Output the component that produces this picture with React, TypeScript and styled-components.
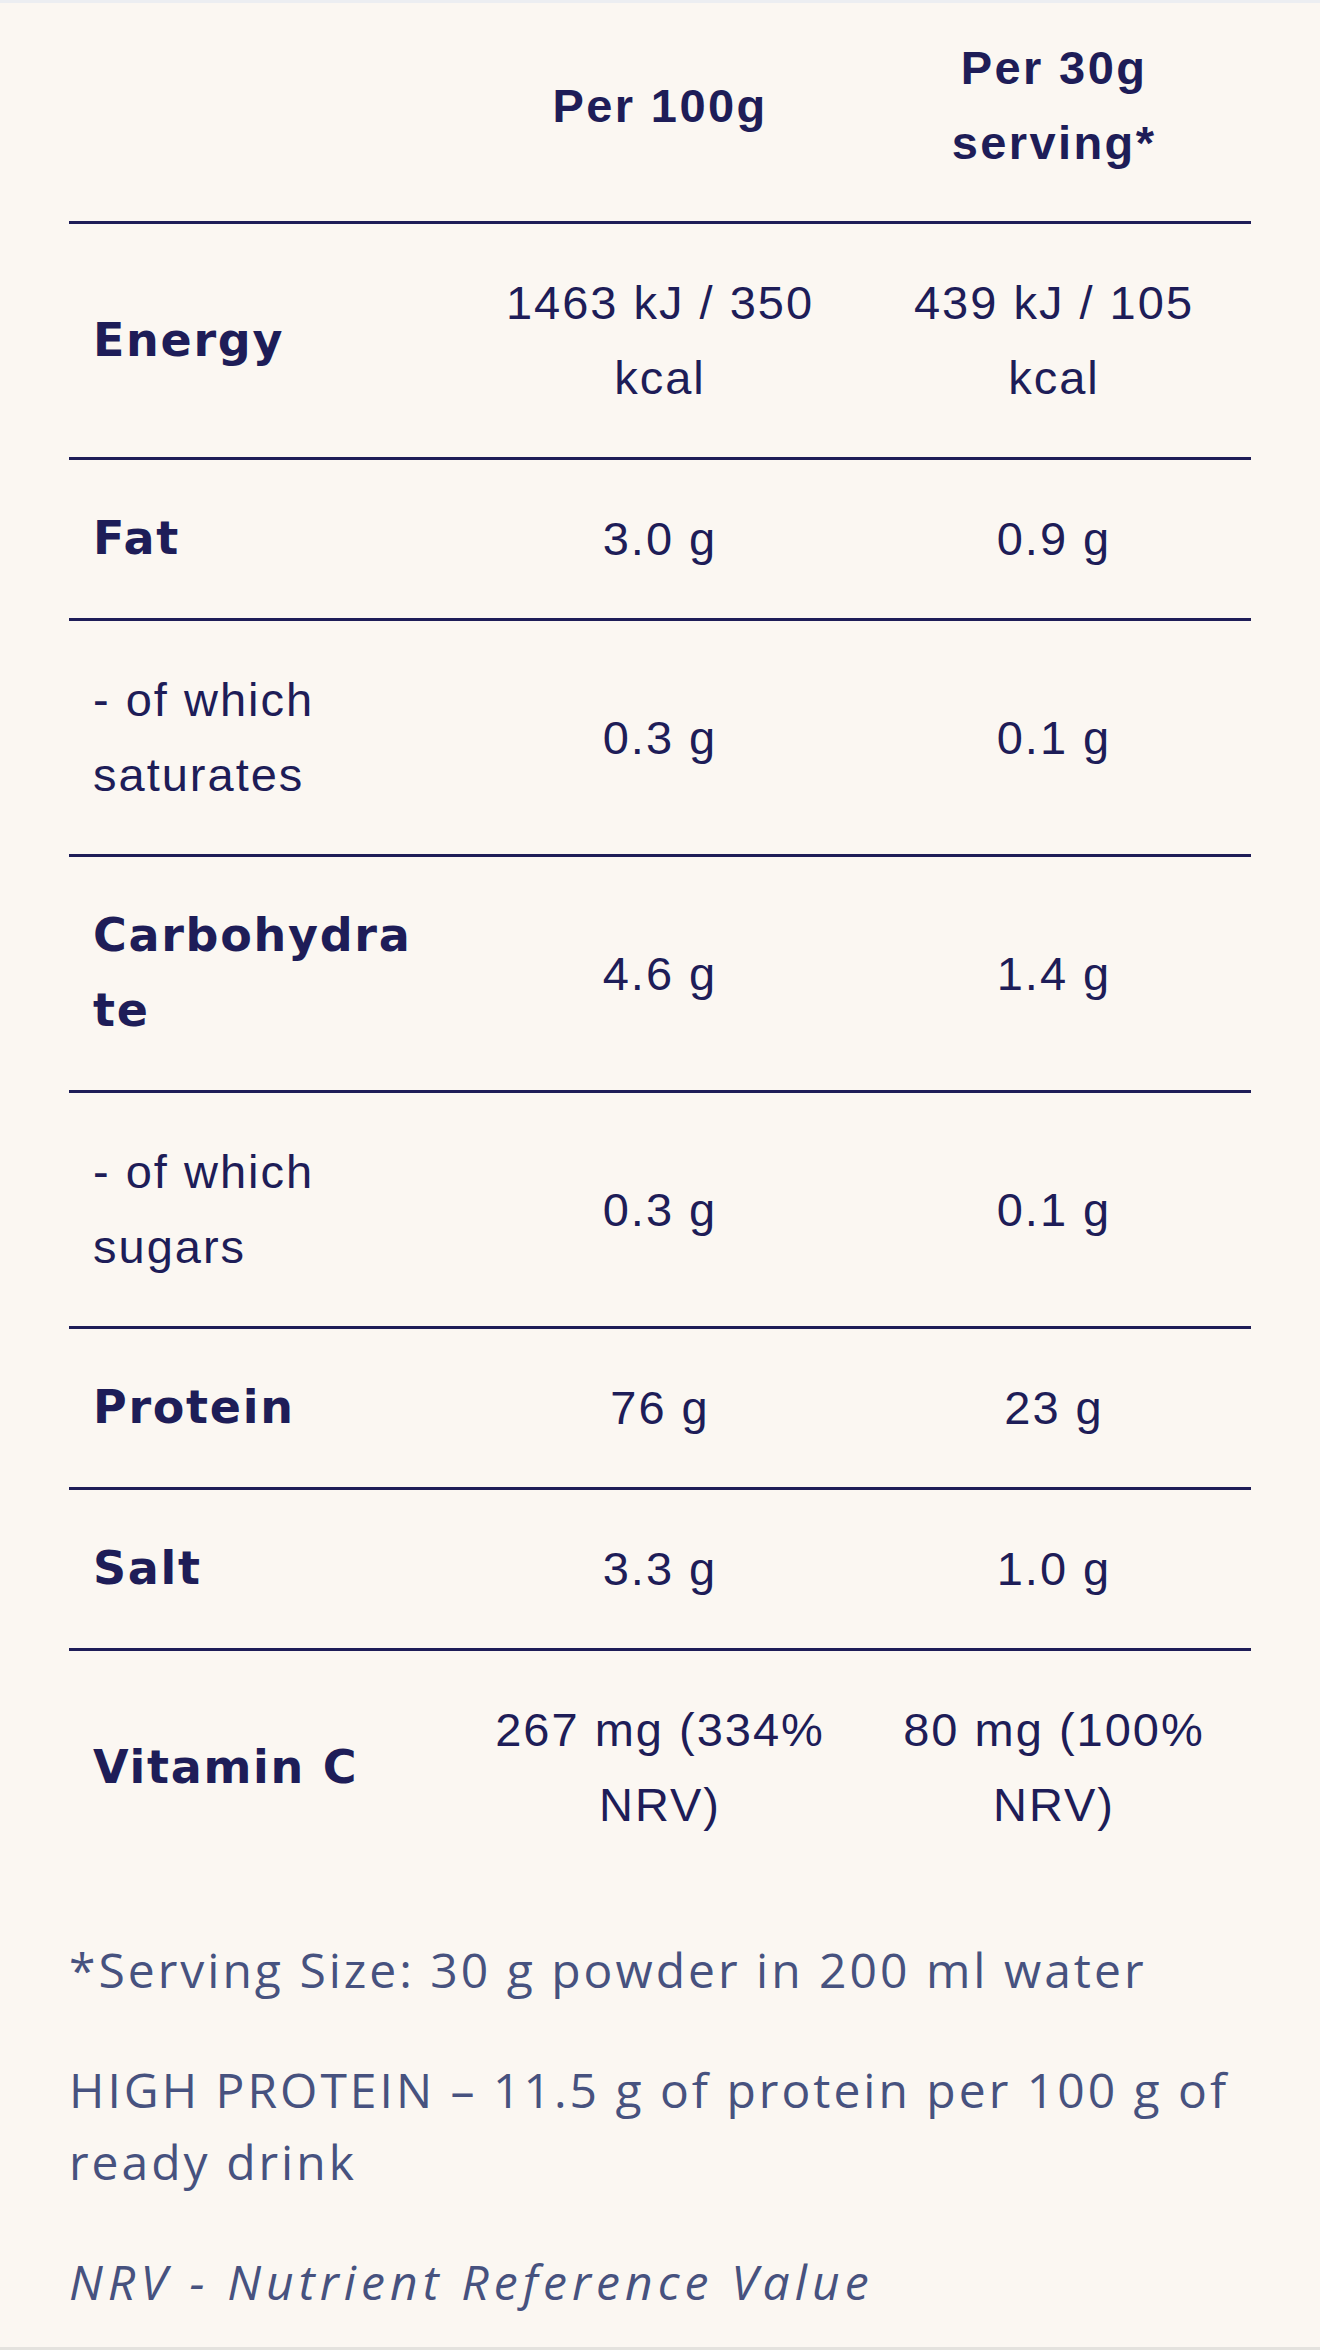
import React from "react";
import styled, { createGlobalStyle } from "styled-components";

const GlobalStyle = createGlobalStyle`
  html, body {
    margin: 0;
    padding: 0;
    background: #fbf7f2;
  }
  * { box-sizing: border-box; }
`;

const NAVY = "#1e1d58";
const SLATE = "#47527f";

const Page = styled.div`
  width: 1320px;
  min-height: 2350px;
  background: #fbf7f2;
  border-top: 3px solid #eceef2;
  border-bottom: 3px solid #e4e2de;
  padding: 0 69px;
  display: flex;
  flex-direction: column;
`;

const Table = styled.div`
  display: flex;
  flex-direction: column;
`;

const Row = styled.div<{ $header?: boolean; $last?: boolean }>`
  display: grid;
  grid-template-columns: repeat(3, 1fr);
  align-items: center;
  padding: ${(p) => (p.$header ? "27px 0 41px" : "41px 0 42px")};
  border-bottom: ${(p) => (p.$last ? "none" : `3px solid ${NAVY}`)};
`;

const Label = styled.div<{ $bold?: boolean }>`
  padding: 0 20px 0 24px;
  color: ${NAVY};
  font-family: ${(p) => (p.$bold ? `"DejaVu Sans", "Lato", sans-serif` : `"Liberation Sans", Arial, sans-serif`)};
  font-weight: ${(p) => (p.$bold ? 700 : 400)};
  font-size: ${(p) => (p.$bold ? "46px" : "47px")};
  letter-spacing: ${(p) => (p.$bold ? "1.7px" : "2px")};
  line-height: 75px;
  overflow-wrap: normal;
`;

const Value = styled.div`
  padding: 0 20px;
  text-align: center;
  color: ${NAVY};
  font-family: "Liberation Sans", Arial, sans-serif;
  font-size: 47px;
  letter-spacing: 2px;
  line-height: 75px;
`;

const HeadCell = styled(Value)`
  font-weight: 700;
  letter-spacing: 2.4px;
`;

const Notes = styled.div`
  display: flex;
  flex-direction: column;
  gap: 48px;
  padding-top: 50px;
`;

const Note = styled.p<{ $italic?: boolean }>`
  margin: 0;
  color: ${SLATE};
  font-family: "Open Sans", "Lato", sans-serif;
  font-weight: 400;
  font-style: ${(p) => (p.$italic ? "italic" : "normal")};
  font-size: 48px;
  letter-spacing: ${(p) => (p.$italic ? "5.1px" : "3px")};
  line-height: 72px;
`;

type Item = { label: React.ReactNode; bold: boolean; a: React.ReactNode; b: React.ReactNode };

const rows: Item[] = [
  { label: "Energy", bold: true, a: "1463 kJ / 350 kcal", b: "439 kJ / 105 kcal" },
  { label: "Fat", bold: true, a: "3.0 g", b: "0.9 g" },
  { label: "- of which saturates", bold: false, a: "0.3 g", b: "0.1 g" },
  {
    label: (
      <>
        Carbohydra
        <wbr />
        te
      </>
    ),
    bold: true,
    a: "4.6 g",
    b: "1.4 g",
  },
  { label: "- of which sugars", bold: false, a: "0.3 g", b: "0.1 g" },
  { label: "Protein", bold: true, a: "76 g", b: "23 g" },
  { label: "Salt", bold: true, a: "3.3 g", b: "1.0 g" },
  { label: "Vitamin C", bold: true, a: "267 mg (334% NRV)", b: "80 mg (100% NRV)" },
];

export default function App() {
  return (
    <>
      <GlobalStyle />
      <Page>
        <Table>
          <Row $header>
            <Label $bold />
            <HeadCell>Per 100g</HeadCell>
            <HeadCell>Per 30g serving*</HeadCell>
          </Row>
          {rows.map((r, i) => (
            <Row key={i} $last={i === rows.length - 1}>
              <Label $bold={r.bold}>{r.label}</Label>
              <Value>{r.a}</Value>
              <Value>{r.b}</Value>
            </Row>
          ))}
        </Table>
        <Notes>
          <Note>*Serving Size: 30 g powder in 200 ml water</Note>
          <Note>HIGH PROTEIN – 11.5 g of protein per 100 g of ready drink</Note>
          <Note $italic>NRV - Nutrient Reference Value</Note>
        </Notes>
      </Page>
    </>
  );
}
